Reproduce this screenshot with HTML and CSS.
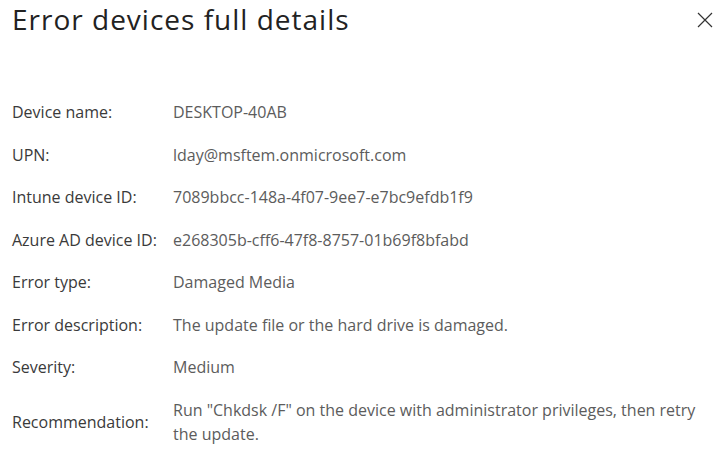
FILE: index.html
```html
<!DOCTYPE html>
<html lang="en">
<head>
<meta charset="utf-8">
<link rel="stylesheet" href="styles.css">
<title>Error devices full details</title>
</head>
<body>
<div class="panel">
  <header class="head">
    <h1 class="title">Error devices full details</h1>
    <button class="close" aria-label="Close">
      <svg width="16" height="16" viewBox="0 0 16 16"><path d="M1 1L15 15M15 1L1 15" stroke="#333" stroke-width="1.2" fill="none"/></svg>
    </button>
  </header>
  <dl class="details">
    <dt>Device name:</dt><dd>DESKTOP-40AB</dd>
    <dt>UPN:</dt><dd>lday@msftem.onmicrosoft.com</dd>
    <dt>Intune device ID:</dt><dd>7089bbcc-148a-4f07-9ee7-e7bc9efdb1f9</dd>
    <dt>Azure AD device ID:</dt><dd>e268305b-cff6-47f8-8757-01b69f8bfabd</dd>
    <dt>Error type:</dt><dd>Damaged Media</dd>
    <dt>Error description:</dt><dd>The update file or the hard drive is damaged.</dd>
    <dt>Severity:</dt><dd>Medium</dd>
    <dt>Recommendation:</dt><dd>Run "Chkdsk /F" on the device with administrator privileges, then retry the update.</dd>
  </dl>
</div>
</body>
</html>
```
FILE: styles.css
```css
html, body { margin: 0; padding: 0; background: #fff; }
body { font-family: "Open Sans", "Noto Sans", sans-serif; color: #333; }
.panel { padding: 0 12px; width: 719px; box-sizing: border-box; }
.head { display: flex; justify-content: space-between; align-items: flex-start; height: 100px; }
.title { margin: 0; font-weight: 400; font-size: 28px; line-height: 39px; color: #222; letter-spacing: 1px; }
.close { margin: 12px -6px 0 0; padding: 0; border: 0; background: none; width: 16px; height: 16px; display: flex; }
.details { margin: 0; display: grid; grid-template-columns: 161px 1fr; row-gap: 18.5px; font-size: 16px; line-height: 24px; }
.details dt { color: #3a3a3a; align-self: center; white-space: nowrap; }
.details dd { margin: 0; color: #5c5c5c; }
```
